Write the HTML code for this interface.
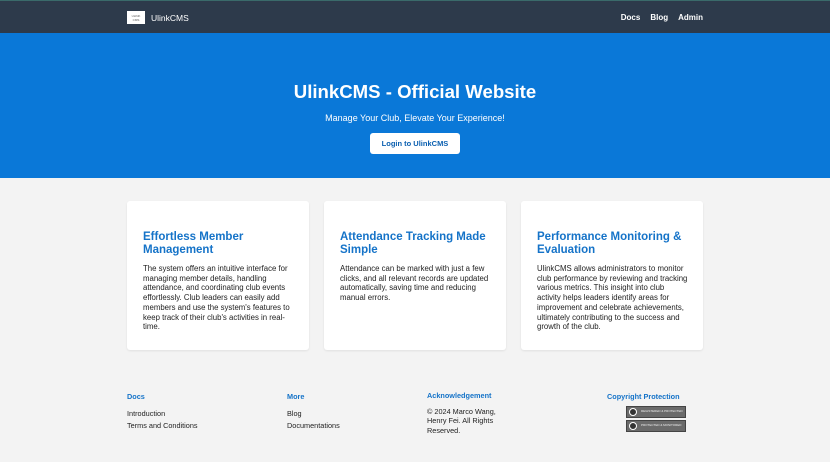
<!DOCTYPE html>
<html><head><style>
*{margin:0;padding:0;box-sizing:border-box}
body{width:830px;height:462px;background:#f3f3f3;font-family:"Liberation Sans",sans-serif;position:relative;overflow:hidden}
.nav{position:absolute;left:0;top:0;width:830px;height:33px;background:#2d3a4b;border-top:1px solid #3a6a6a}
.logo{position:absolute;left:127px;top:10px;width:18px;height:13px;background:#fff;font-size:3px;color:#555;text-align:center;padding-top:3px}
.brand{position:absolute;left:151px;top:12px;color:#fff;font-size:8.5px}
.links{position:absolute;right:127px;top:12px;color:#fff;font-size:8px;font-weight:bold}
.links span{margin-left:10px}
.hero{position:absolute;top:33px;left:0;width:830px;height:145px;background:#0a78d8;text-align:center;color:#fff}
.hero h1{font-size:18.6px;margin-top:48px;font-weight:bold}
.hero p{font-size:9px;margin-top:10px}
.btn{display:inline-block;margin-top:10px;background:#fff;color:#0a5fb0;font-size:7.5px;font-weight:bold;padding:6px 12px;border-radius:3px}
.card{position:absolute;top:201px;width:182px;height:149px;background:#fff;border-radius:3px;box-shadow:0 1px 2px rgba(0,0,0,.08);padding:30px 14px 0 16px}
.card h2{color:#1573c8;font-size:11.5px;line-height:13px;font-weight:bold}
.card p{color:#222;font-size:7.8px;line-height:9.7px;margin-top:7px}
.f{position:absolute;top:391px;font-size:7.3px;color:#222;line-height:12.5px}
.f h3{color:#1573c8;font-size:7.3px;font-weight:bold;margin-bottom:4px}
.badge{width:60px;height:12px;background:#6a6a6a;margin-top:2px;font-size:3px;color:#eee;display:flex;align-items:center;gap:4px;padding-left:2px;border:1px solid #444}
.badge i{display:inline-block;width:8px;height:8px;border:1px solid #fff;border-radius:50%;background:#333}
</style></head><body>
<div class="nav"><div class="logo">ULINK<br>CMS</div><div class="brand">UlinkCMS</div>
<div class="links"><span>Docs</span><span>Blog</span><span>Admin</span></div></div>
<div class="hero"><h1>UlinkCMS - Official Website</h1><p>Manage Your Club, Elevate Your Experience!</p><div class="btn">Login to UlinkCMS</div></div>
<div class="card" style="left:127px"><h2>Effortless Member Management</h2><p>The system offers an intuitive interface for managing member details, handling attendance, and coordinating club events effortlessly. Club leaders can easily add members and use the system's features to keep track of their club's activities in real-time.</p></div>
<div class="card" style="left:324px"><h2>Attendance Tracking Made Simple</h2><p>Attendance can be marked with just a few clicks, and all relevant records are updated automatically, saving time and reducing manual errors.</p></div>
<div class="card" style="left:521px"><h2>Performance Monitoring &amp; Evaluation</h2><p>UlinkCMS allows administrators to monitor club performance by reviewing and tracking various metrics. This insight into club activity helps leaders identify areas for improvement and celebrate achievements, ultimately contributing to the success and growth of the club.</p></div>
<div class="f" style="left:127px"><h3>Docs</h3>Introduction<br>Terms and Conditions</div>
<div class="f" style="left:287px"><h3>More</h3>Blog<br>Documentations</div>
<div class="f" style="left:427px;width:85px;line-height:9.5px"><h3 style="margin-bottom:6px">Acknowledgement</h3>© 2024 Marco Wang, Henry Fei. All Rights Reserved.</div>
<div class="f" style="left:607px"><h3 style="margin-bottom:2px">Copyright Protection</h3>
<div class="badge" style="margin-left:19px"><i></i>REGISTERED &amp; PROTECTED</div>
<div class="badge" style="margin-left:19px"><i></i>PROTECTED &amp; MONITORED</div></div>
</body></html>
